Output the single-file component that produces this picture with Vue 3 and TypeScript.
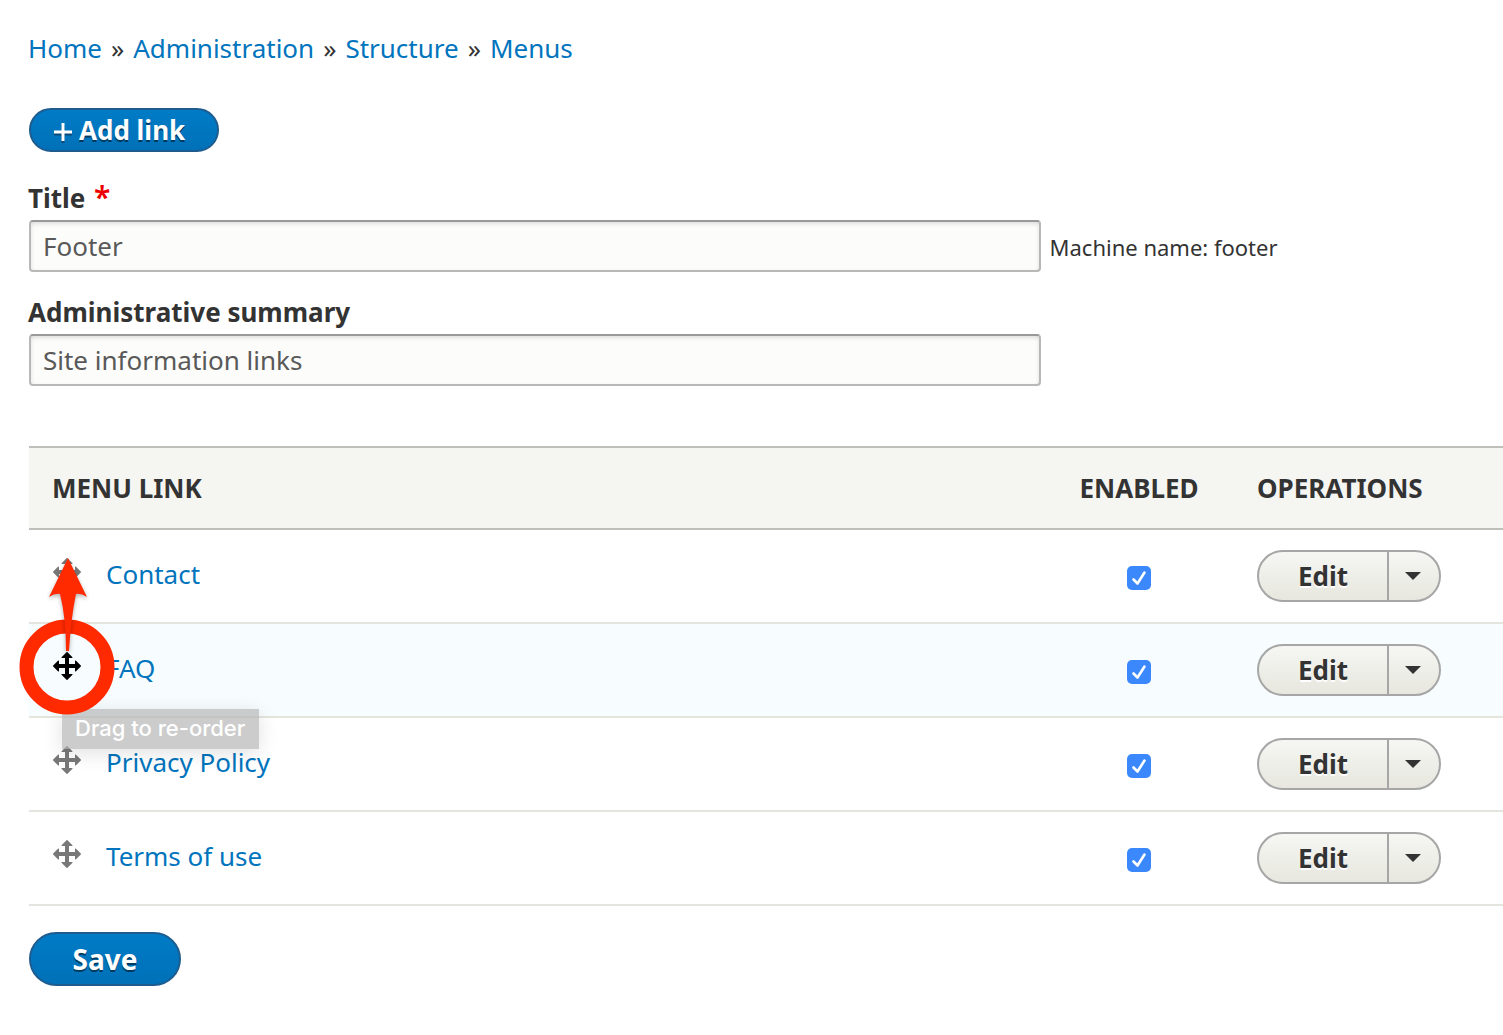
<script setup lang="ts">
import { ref } from 'vue'

interface MenuLink {
  id: string
  title: string
  enabled: boolean
  dragging?: boolean
}

const crumbs: string[] = ['Home', 'Administration', 'Structure', 'Menus']

const title = ref('Footer')
const summary = ref('Site information links')

const links = ref<MenuLink[]>([
  { id: 'contact', title: 'Contact', enabled: true },
  { id: 'faq', title: 'FAQ', enabled: true, dragging: true },
  { id: 'privacy', title: 'Privacy Policy', enabled: true },
  { id: 'terms', title: 'Terms of use', enabled: true },
])
</script>

<template>
  <main class="page">
    <nav class="breadcrumb" aria-label="Breadcrumb">
      <template v-for="(crumb, i) in crumbs" :key="crumb">
        <span v-if="i > 0" class="separator">»</span>
        <a href="#">{{ crumb }}</a>
      </template>
    </nav>

    <button type="button" class="primary add">
      <svg width="18" height="18" viewBox="0 0 18 18" aria-hidden="true">
        <path d="M9 2v18M0 11h18" stroke="#0b4a78" stroke-width="3" fill="none" />
        <path d="M9 0v18M0 9h18" stroke="#fff" stroke-width="3" fill="none" />
      </svg>
      <span>Add link</span>
    </button>

    <form @submit.prevent>
      <div class="field">
        <label for="title">Title <span class="required">*</span></label>
        <div class="control">
          <input id="title" v-model="title" type="text" />
          <span class="machine">Machine name: footer</span>
        </div>
      </div>
      <div class="field">
        <label for="summary">Administrative summary</label>
        <div class="control">
          <input id="summary" v-model="summary" type="text" />
        </div>
      </div>

      <table>
        <thead>
          <tr>
            <th class="name">Menu link</th>
            <th class="enabled">Enabled</th>
            <th class="operations">Operations</th>
          </tr>
        </thead>
        <tbody>
          <tr v-for="link in links" :key="link.id" :class="{ active: link.dragging }">
            <td class="name">
              <div class="link">
                <button type="button" class="handle" :aria-label="'Move ' + link.title">
                  <svg class="move" width="32" height="32" viewBox="0 0 16 16" aria-hidden="true">
                    <path
                      d="M14.904 7.753l-2.373-2.372c-.291-.292-.529-.193-.529.22v1.399h-3v-3h1.398c.414 0 .512-.239.221-.53l-2.371-2.372c-.137-.136-.36-.136-.497 0l-2.372 2.372c-.292.292-.193.53.22.53h1.399v3h-3v-1.369c0-.413-.239-.511-.53-.22l-2.372 2.372c-.136.136-.136.359 0 .494l2.372 2.372c.291.292.53.192.53-.219v-1.43h3v3h-1.4c-.413 0-.511.238-.22.529l2.374 2.373c.137.137.36.137.495 0l2.373-2.373c.29-.291.19-.529-.222-.529h-1.398v-3h3v1.4c0 .412.238.511.529.219l2.373-2.371c.137-.137.137-.359 0-.495z"
                    />
                  </svg>
                  <template v-if="link.dragging">
                    <span class="tooltip">Drag to re-order</span>
                    <svg class="marker" width="96" height="168" viewBox="0 0 96 168" aria-hidden="true">
                      <circle cx="48" cy="117" r="40.500" fill="none" stroke="#ff2a00" stroke-width="14" />
                      <path
                        class="arrow"
                        d="M49 8L68 47Q62 43 57 44Q52 68 50 101H47Q47 68 41 44Q36 43 30 47Z"
                        fill="#ff2a00"
                      />
                    </svg>
                  </template>
                </button>
                <a href="#">{{ link.title }}</a>
              </div>
            </td>
            <td class="enabled">
              <span class="check">
                <input v-model="link.enabled" type="checkbox" :aria-label="'Enable ' + link.title" />
                <svg v-if="link.enabled" width="24" height="24" viewBox="0 0 24 24" aria-hidden="true">
                  <path
                    d="M6.500 13.500L10.500 17.500L17.500 6.500"
                    fill="none"
                    stroke="#fff"
                    stroke-width="2.600"
                    stroke-linecap="round"
                    stroke-linejoin="round"
                  />
                </svg>
              </span>
            </td>
            <td class="operations">
              <div class="dropbutton">
                <button type="button" class="edit">Edit</button>
                <button type="button" class="toggle" aria-label="List additional actions">
                  <svg width="16" height="8" viewBox="0 0 16 8" aria-hidden="true">
                    <path d="M0 0H16L8 8Z" fill="#333" />
                  </svg>
                </button>
              </div>
            </td>
          </tr>
        </tbody>
      </table>

      <button type="submit" class="primary save">Save</button>
    </form>
  </main>
</template>

<style>
body {
  margin: 0;
  background: #fff;
}
</style>

<style scoped>
.page {
  box-sizing: border-box;
  padding: 31px 0 48px 28px;
  color: #333;
  font: 26px/34px 'Lucida Grande', 'Noto Sans', 'Open Sans', sans-serif;
}

button,
input {
  font: inherit;
}

a {
  color: #0074bd;
  text-decoration: none;
}

.breadcrumb {
  display: flex;
  gap: 9px;
}

.primary {
  display: flex;
  align-items: center;
  justify-content: center;
  box-sizing: border-box;
  margin-left: 1px;
  border: 2px solid #1e5c90;
  border-radius: 40px;
  background: linear-gradient(#007bc6, #0071b8);
  color: #fff;
  font-weight: 700;
  text-shadow: 0 2px rgba(0, 0, 0, 0.5);
  cursor: pointer;
}

.add {
  gap: 7px;
  height: 44px;
  margin-top: 43px;
  padding: 0 32px 0 23px;
}

.add svg {
  overflow: visible;
  margin-top: 4px;
}

.save {
  min-width: 152px;
  height: 54px;
  margin-top: 26px;
  padding: 0 40px;
  font-size: 28px;
}

form {
  margin-top: 28px;
}

.field {
  margin-bottom: 22px;
}

.field label {
  display: block;
  height: 40px;
  line-height: 36px;
  font-weight: 700;
}

.required {
  margin-left: 2px;
  color: #e00;
  font-size: 30px;
  font-weight: 600;
  line-height: 28px;
}

.control {
  display: grid;
  grid-template-columns: 29fr 13fr;
  gap: 9px;
  align-items: center;
  padding-left: 1px;
}

.control input {
  box-sizing: border-box;
  width: 100%;
  height: 52px;
  padding: 0 12px;
  border: 2px solid #b8b8b8;
  border-top-color: #999;
  border-radius: 4px;
  background: #fcfcfa;
  box-shadow: inset 0 2px 4px rgba(0, 0, 0, 0.12);
  color: #595959;
}

.machine {
  padding-top: 2px;
  font-size: 22px;
}

table {
  width: calc(100% - 1px);
  margin: 60px 0 0 1px;
  border-collapse: separate;
  border-spacing: 0;
  table-layout: fixed;
}

th {
  height: 80px;
  padding: 0;
  border: solid #bfbfba;
  border-width: 2px 0;
  background: #f5f5f2;
  font-weight: 700;
  text-transform: uppercase;
  text-align: left;
}

td {
  height: 92px;
  padding: 0;
  border-bottom: 2px solid #e6e4df;
}

.active td {
  background: #f7fcff;
}

th.name {
  padding-left: 23px;
}

th.enabled {
  width: 188px;
}

.enabled {
  text-align: center;
}

th.operations {
  width: 246px;
}

.operations {
  padding-left: 24px;
}

.link {
  display: flex;
  align-items: center;
  gap: 23px;
  padding-left: 22px;
}

.link a {
  padding-bottom: 4px;
}

.handle {
  position: relative;
  display: flex;
  padding: 0 0 8px;
  border: 0;
  background: none;
  cursor: move;
}

.move {
  fill: #787878;
}

.active .move {
  fill: #000;
}

.tooltip {
  position: absolute;
  z-index: 1;
  top: 59px;
  left: 11px;
  padding: 0 14px 2px 13px;
  background: rgba(176, 176, 176, 0.65);
  box-shadow: 0 4px 20px rgba(0, 0, 0, 0.12);
  color: #fff;
  font: 500 22px/38px Inter, sans-serif;
  white-space: nowrap;
}

.marker {
  position: absolute;
  z-index: 2;
  top: -100px;
  left: -32px;
  pointer-events: none;
}

.arrow {
  filter: drop-shadow(0 2px 2px rgba(0, 0, 0, 0.3));
}

.check {
  display: grid;
  justify-content: center;
  padding-top: 4px;
}

.check > * {
  grid-area: 1 / 1;
}

.check input {
  appearance: none;
  width: 24px;
  height: 24px;
  margin: 0;
  border-radius: 5px;
  background: #3b88fd;
}

.check svg {
  pointer-events: none;
}

.dropbutton {
  display: inline-flex;
  box-sizing: border-box;
  width: 184px;
  height: 52px;
  overflow: hidden;
  vertical-align: middle;
  border: 2px solid #a6a6a6;
  border-radius: 26px;
  background: linear-gradient(#f6f6f3, #e7e7df);
}

.dropbutton button {
  display: flex;
  align-items: center;
  justify-content: center;
  padding: 0;
  border: 0;
  background: none;
  color: #333;
  font-weight: 700;
  text-shadow: 0 2px #fff;
  cursor: pointer;
}

.dropbutton .edit {
  flex: 1;
}

.dropbutton .toggle {
  width: 52px;
  padding-right: 2px;
  border-left: 2px solid #a6a6a6;
}
</style>
